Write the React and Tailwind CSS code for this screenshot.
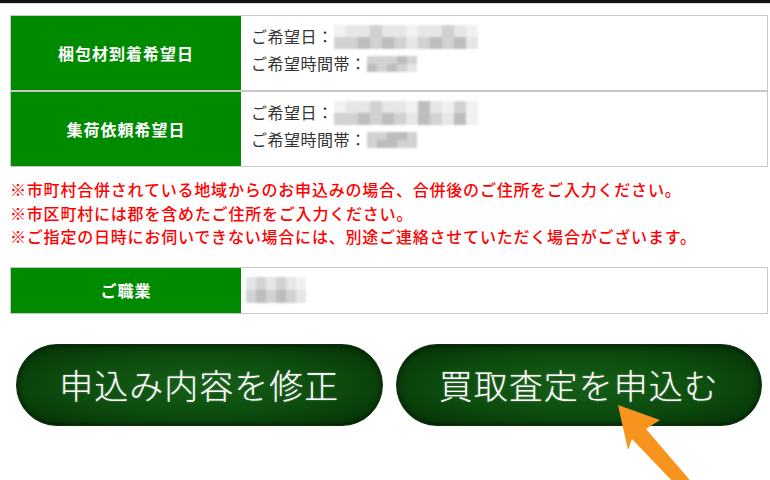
import React from "react";

const jp = { fontFamily: '"Noto Sans CJK JP", "Noto Sans", sans-serif' };

function Mosaic({ rows, cell = 10, h = 12 }) {
  return (
    <div className="flex flex-col blur-[1.2px]">
      {rows.map((r, i) => (
        <div key={i} className="flex">
          {r.map((c, j) => (
            <div key={j} style={{ width: cell, height: h, background: c }} />
          ))}
        </div>
      ))}
    </div>
  );
}

const a = "#e6e6e6";
const b = "#d2d2d2";
const c = "#bdbdbd";
const d = "#f1f1f1";

function LabelCell({ children }) {
  return (
    <div className="w-[230px] shrink-0 bg-[#008a00] flex items-center justify-center text-white font-bold text-[16px] tracking-[1px]">
      {children}
    </div>
  );
}

function DateRow({ label, date, time }) {
  return (
    <div className="flex h-[74px]">
      <LabelCell>{label}</LabelCell>
      <div className="flex-1 bg-white pl-[10px] pt-[7px] text-[#333] text-[16px] leading-[27px] tracking-[0.5px]">
        <div className="flex items-center">
          <span>ご希望日：</span>
          {date}
        </div>
        <div className="flex items-center">
          <span>ご希望時間帯：</span>
          {time}
        </div>
      </div>
    </div>
  );
}

export default function App() {
  return (
    <div className="relative w-[770px] h-[480px] overflow-hidden bg-white" style={jp}>
      <div className="h-[3px] bg-[#111]" />
      <div className="h-[1px] bg-[#ddd]" />

      <div className="pl-[10px] pr-[2px] pt-[11px]">
        <div className="border border-[#c8c8c8] flex flex-col">
          <DateRow
            label="梱包材到着希望日"
            date={
              <Mosaic
                cell={12}
                rows={[
                  [d, a, a, b, a, a, d, a, a, b, a, d],
                  [b, b, c, b, c, b, a, b, c, b, c, a],
                ]}
              />
            }
            time={
              <Mosaic
                cell={10}
                h={8}
                rows={[
                  [b, b, b, c, b],
                  [c, b, c, b, a],
                ]}
              />
            }
          />
          <div className="h-[2px] bg-[#c8c8c8]" />
          <DateRow
            label="集荷依頼希望日"
            date={
              <Mosaic
                cell={12}
                rows={[
                  [d, a, a, b, a, a, d, c, a, d, b, d],
                  [b, b, c, b, c, b, a, c, b, a, c, d],
                ]}
              />
            }
            time={
              <Mosaic
                cell={10}
                h={8}
                rows={[
                  [b, b, c, c, b],
                  [b, c, c, b, b],
                ]}
              />
            }
          />
        </div>
      </div>

      <div className="pl-[10px] pt-[11px] text-[#ff0000] text-[16px] leading-[23.5px] tracking-[0.8px] font-medium">
        <p>※市町村合併されている地域からのお申込みの場合、合併後のご住所をご入力ください。</p>
        <p>※市区町村には郡を含めたご住所をご入力ください。</p>
        <p>※ご指定の日時にお伺いできない場合には、別途ご連絡させていただく場合がございます。</p>
      </div>

      <div className="pl-[10px] pr-[2px] pt-[18px]">
        <div className="border border-[#c8c8c8] flex h-[47px]">
          <LabelCell>ご職業</LabelCell>
          <div className="flex-1 bg-white flex items-center pl-[5px]">
            <Mosaic
              cell={10}
              h={13}
              rows={[
                [a, b, a, b, a, d],
                [b, c, b, c, b, a],
              ]}
            />
          </div>
        </div>
      </div>

      <div className="flex gap-[13px] pl-[16px] pr-[8px] pt-[30px]">
        {["申込み内容を修正", "買取査定を申込む"].map((t) => (
          <button
            key={t}
            className="w-[367px] h-[82px] rounded-full border border-[#0d2d0d] bg-[radial-gradient(ellipse_at_center,#165e17_0%,#0c4b0d_55%,#053005_100%)] shadow-[inset_0_0_6px_rgba(0,0,0,0.6)] flex items-center justify-center text-white text-[34px] font-light tracking-[1px] [text-shadow:0_0_2px_rgba(255,255,255,0.4)]"
          >
            {t}
          </button>
        ))}
      </div>

      <svg
        className="absolute left-[600px] top-[395px]"
        width="110"
        height="90"
        viewBox="0 0 110 90"
      >
        <polygon
          points="18,10 60,25 46,34 94,90 76,90 32,44 28,55"
          fill="#f7941d"
        />
      </svg>
    </div>
  );
}
